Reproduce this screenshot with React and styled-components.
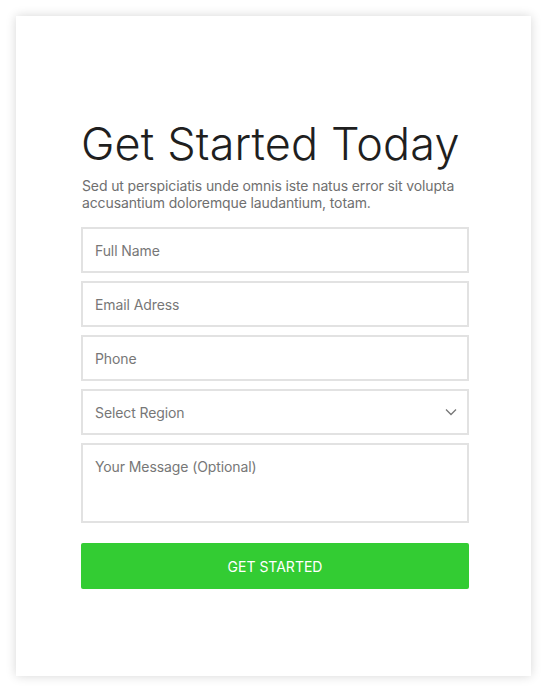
import React from "react";
import styled, { createGlobalStyle } from "styled-components";

const GlobalStyle = createGlobalStyle`
  * {
    box-sizing: border-box;
  }
  body {
    margin: 0;
    background: #ffffff;
    font-family: Inter, "Noto Sans", sans-serif;
  }
`;

const Page = styled.div`
  padding: 16px;
`;

const Card = styled.section`
  width: 515px;
  height: 660px;
  background: #ffffff;
  box-shadow: 0 0 10px rgba(0, 0, 0, 0.16);
  padding: 101px 62px 0 65px;
`;

const Title = styled.h1`
  margin: 0;
  font-size: 45px;
  font-weight: 300;
  line-height: 54px;
  letter-spacing: 0.15px;
  color: #1f1f1f;
`;

const Lead = styled.p`
  margin: 6px 0 16px 1px;
  font-size: 14px;
  line-height: 17px;
  letter-spacing: -0.12px;
  color: #6f6f6f;
`;

const Form = styled.form`
  display: flex;
  flex-direction: column;
  gap: 8px;
`;

const fieldStyles = `
  width: 100%;
  border: 2px solid #e2e2e2;
  border-radius: 0;
  background: #ffffff;
  font-family: Inter, "Noto Sans", sans-serif;
  font-size: 14px;
  letter-spacing: -0.1px;
  color: #555;
  padding: 0 12px;
  outline: none;
  &::placeholder {
    color: #777777;
  }
`;

const Input = styled.input`
  ${fieldStyles}
  height: 46px;
`;

const SelectWrap = styled.div`
  position: relative;
`;

const Select = styled.select`
  ${fieldStyles}
  height: 46px;
  appearance: none;
  color: #777777;
`;

const Chevron = styled.svg`
  position: absolute;
  right: 12px;
  top: 19px;
  pointer-events: none;
`;

const Message = styled.textarea`
  ${fieldStyles}
  height: 80px;
  padding-top: 12px;
  resize: none;
  line-height: 20px;
`;

const Submit = styled.button`
  margin-top: 12px;
  height: 46px;
  width: 100%;
  border: none;
  border-radius: 2px;
  background: #33cc33;
  color: #ffffff;
  font-family: Inter, "Noto Sans", sans-serif;
  font-size: 14px;
  text-transform: uppercase;
  cursor: pointer;
`;

const App = () => {
  return (
    <>
      <GlobalStyle />
      <Page>
        <Card>
          <Title>Get Started Today</Title>
          <Lead>
            Sed ut perspiciatis unde omnis iste natus error sit volupta
            accusantium doloremque laudantium, totam.
          </Lead>
          <Form onSubmit={(e) => e.preventDefault()}>
            <Input placeholder="Full Name" />
            <Input placeholder="Email Adress" />
            <Input placeholder="Phone" />
            <SelectWrap>
              <Select defaultValue="">
                <option value="" disabled>
                  Select Region
                </option>
                <option value="eu">Europe</option>
                <option value="na">North America</option>
                <option value="as">Asia</option>
              </Select>
              <Chevron width="12" height="8" viewBox="0 0 12 8">
                <path
                  d="M1 1.5 L6 6.5 L11 1.5"
                  fill="none"
                  stroke="#777"
                  strokeWidth="1.3"
                />
              </Chevron>
            </SelectWrap>
            <Message placeholder="Your Message (Optional)" />
            <Submit type="submit">Get Started</Submit>
          </Form>
        </Card>
      </Page>
    </>
  );
};

export default App;
